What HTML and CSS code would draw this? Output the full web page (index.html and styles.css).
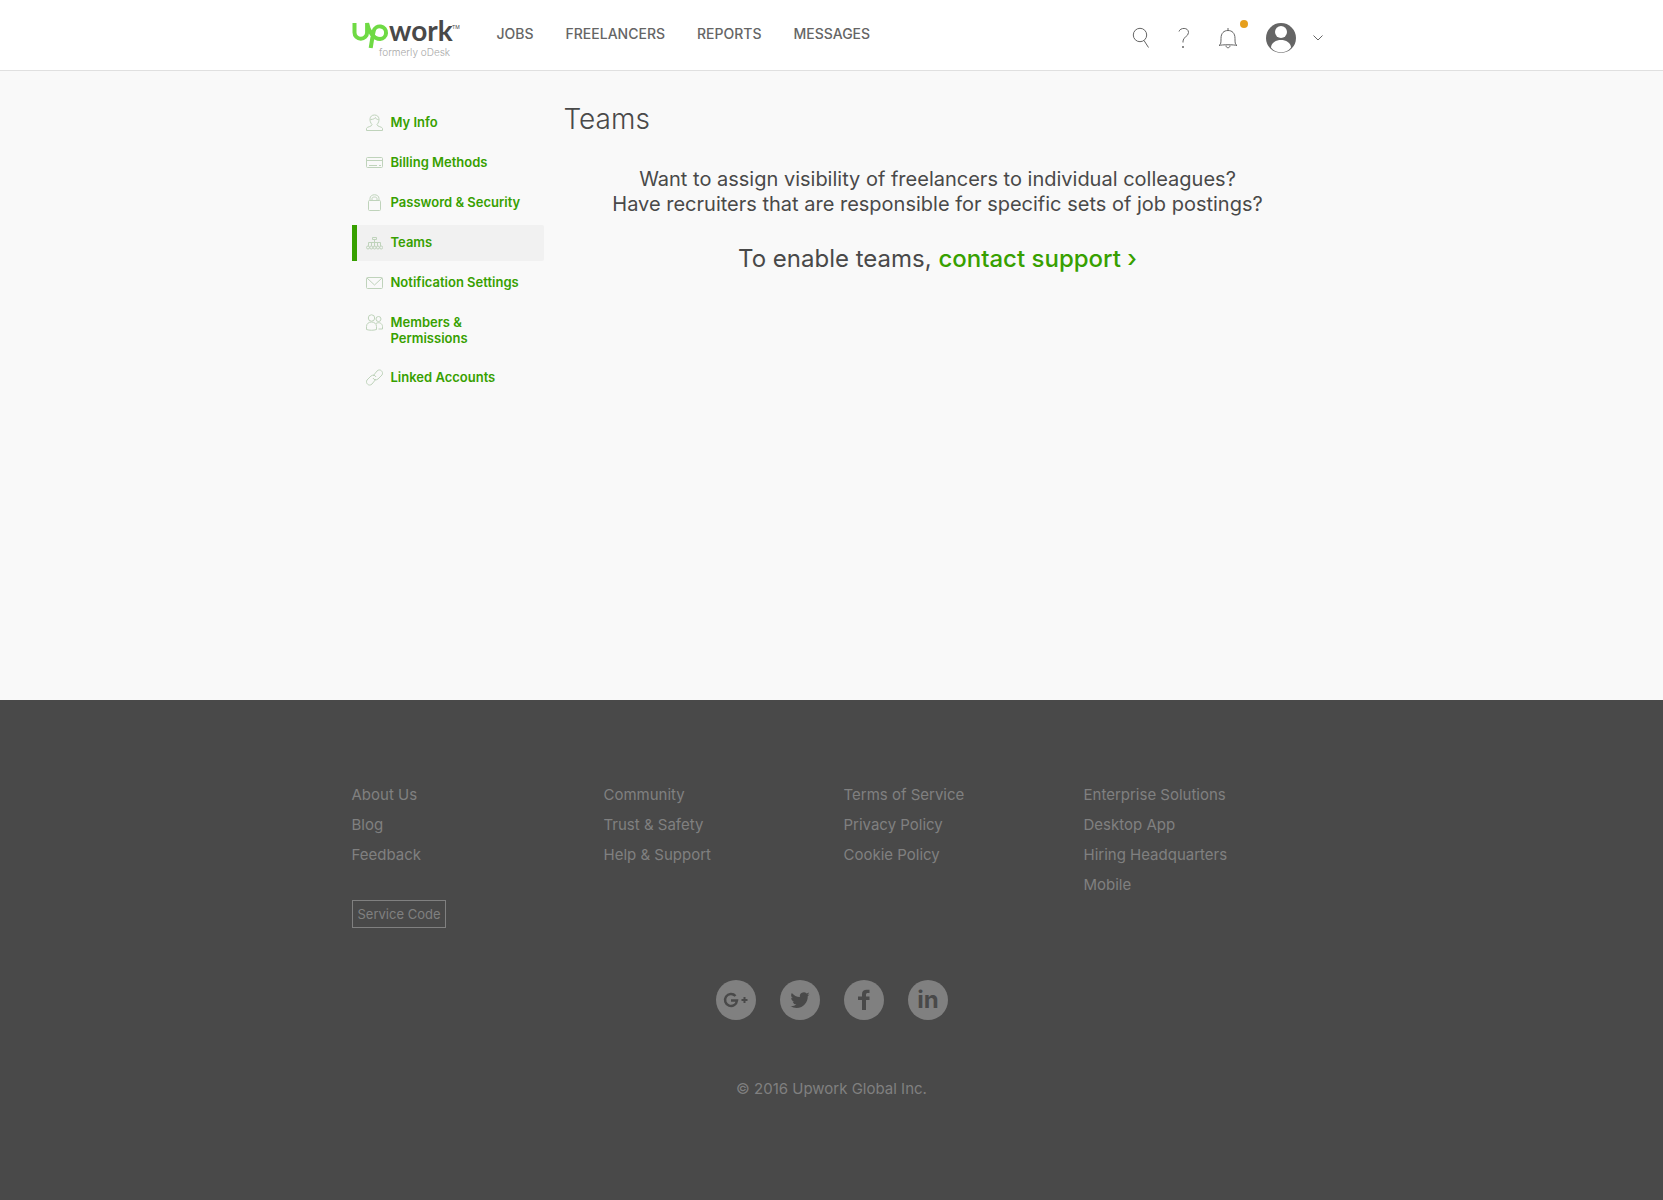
FILE: index.html
```html
<!DOCTYPE html>
<html lang="en">
<head>
<meta charset="utf-8">
<title>Teams - Upwork</title>
<meta name="viewport" content="width=device-width, initial-scale=1">
<link rel="stylesheet" href="styles.css">
</head>
<body>
<header class="site-header">
  <div class="header-inner">
    <a class="logo" href="#" aria-label="Upwork, formerly oDesk">
      <svg width="108" height="44" viewBox="0 0 108 44">
        <path class="logo-mark" d="M2.500 8v9.500a6.300 6.300 0 0 0 12.600 0V8c1.500 8 6 16 13 16a6.300 6.300 0 1 0-6.400-8c-1 4-1.700 9-3 17"/>
        <text class="logo-word" x="37" y="26">work</text>
        <text class="logo-tm" x="100" y="14">TM</text>
        <text class="logo-former" x="27" y="41">formerly oDesk</text>
      </svg>
    </a>
    <nav class="main-nav" aria-label="Main">
      <a href="#">JOBS</a>
      <a href="#">FREELANCERS</a>
      <a href="#">REPORTS</a>
      <a href="#">MESSAGES</a>
    </nav>
    <div class="tools">
      <button class="tool" type="button" aria-label="Search"><svg width="18" height="22" viewBox="0 0 18 22"><circle cx="8" cy="8" r="6.700"/><path d="M12 13.500l4.500 7"/></svg></button>
      <button class="tool" type="button" aria-label="Help"><svg width="12" height="22" viewBox="0 0 12 22"><path d="M1 4.500C2 .5 10.500 0 10.500 5.500c0 4-5.500 4.500-5.500 8.500v1.500"/><circle class="solid" cx="5" cy="20" r="1"/></svg></button>
      <button class="tool" type="button" aria-label="Notifications"><svg width="20" height="22" viewBox="0 0 20 22"><path d="M10 1v2M1 18.500c2-1 2-3 2-7C3 6 6 3.500 10 3.500s7 2.500 7 8c0 4 0 6 2 7-3-1-15-1-18 0zM8 18.500c0 3 4 3 4 0"/></svg><span class="badge"></span></button>
      <button class="tool account" type="button" aria-label="Account">
        <svg width="30" height="30" viewBox="0 0 30 30"><circle class="solid" cx="15" cy="15" r="15"/><circle class="cut" cx="15" cy="9" r="6"/><path class="cut" d="M5 24.500c.5-10 19.500-10 20 0-5 6.500-15 6.500-20 0z"/></svg>
        <svg width="10" height="8" viewBox="0 0 10 8"><path d="M.5 1.500L5 6l4.500-4.500"/></svg>
      </button>
    </div>
  </div>
</header>

<div class="page">
  <nav class="side-nav" aria-label="Settings">
    <a href="#"><svg width="17" height="17" viewBox="0 0 17 17"><path d="M.5 16.500v-2c0-2 5.500-1.500 5.500-4-3-3-3-9.500 2.500-9.500s5.500 6.500 2.500 9.500c0 2.500 5.500 2 5.500 4v2zM4.500 5.500c3 0 4-1 5-2 0 1 1 2 3 2"/></svg>My Info</a>
    <a href="#"><svg width="17" height="17" viewBox="0 0 17 17"><rect x=".5" y="3.500" width="16" height="10" rx="1"/><path d="M1 6.500h15M3 11.500h8M13 11.500h2"/></svg>Billing Methods</a>
    <a href="#"><svg width="17" height="17" viewBox="0 0 17 17"><rect x="2.500" y="6.500" width="12" height="10" rx="1"/><path d="M4 6.500v-2c0-5 9-5 9 0v2M6 6.500v-2c0-2 5-2 5 0v2"/></svg>Password &amp; Security</a>
    <a class="current" href="#" aria-current="page"><svg width="17" height="17" viewBox="0 0 17 17"><path d="M6.500 3.500h4v2h-4zM8.500 5.500v7M2.500 12V8.500h12V12M5.500 8.500V12M11.500 8.500V12"/><circle cx="2" cy="13.500" r="1.500"/><circle cx="5.300" cy="13.500" r="1.500"/><circle cx="8.600" cy="13.500" r="1.500"/><circle cx="11.900" cy="13.500" r="1.500"/><circle cx="15.200" cy="13.500" r="1.500"/></svg>Teams</a>
    <a href="#"><svg width="17" height="17" viewBox="0 0 17 17"><rect x=".5" y="3.500" width="16" height="11" rx="1"/><path d="M1 4l7.500 7L16 4"/></svg>Notification Settings</a>
    <a href="#"><svg width="17" height="17" viewBox="0 0 17 17"><circle cx="5.500" cy="4" r="3.200"/><circle cx="12.500" cy="5" r="2.500"/><path d="M.5 15.500v-3c0-6 10-6 10 0v3c-3 1-7 1-10 0zM10 9.500c3-2 6.500 0 6.500 3v2.500h-4"/></svg>Members &amp; Permissions</a>
    <a href="#"><svg width="17" height="17" viewBox="0 0 17 17"><path d="M7 7l4-5c3-3 7 1 5 4l-4 4c-2 1.500-4 1-5-1M10 10l-4 5c-3 3-7-1-5-4l4-4c2-1.500 4-1 5 1"/></svg>Linked Accounts</a>
  </nav>
  <main class="content">
    <h1>Teams</h1>
    <p class="intro">Want to assign visibility of freelancers to individual colleagues?<br>Have recruiters that are responsible for specific sets of job postings?</p>
    <p class="enable">To enable teams, <a href="#">contact support ›</a></p>
  </main>
</div>

<footer class="site-footer">
  <div class="footer-inner">
    <div class="footer-links">
      <div class="col">
        <a href="#">About Us</a><a href="#">Blog</a><a href="#">Feedback</a>
        <button class="service-code" type="button">Service Code</button>
      </div>
      <div class="col"><a href="#">Community</a><a href="#">Trust &amp; Safety</a><a href="#">Help &amp; Support</a></div>
      <div class="col"><a href="#">Terms of Service</a><a href="#">Privacy Policy</a><a href="#">Cookie Policy</a></div>
      <div class="col"><a href="#">Enterprise Solutions</a><a href="#">Desktop App</a><a href="#">Hiring Headquarters</a><a href="#">Mobile</a></div>
    </div>
    <div class="social">
      <a href="#" aria-label="Google Plus"><svg width="40" height="40" viewBox="0 0 40 40"><path class="line" d="M19.500 16a6 6 0 1 0 1.500 4.500h-6"/><path class="line thin" d="M28.500 17v6M25.500 20h6"/></svg></a>
      <a href="#" aria-label="Twitter"><svg width="40" height="40" viewBox="0 0 40 40"><path transform="translate(10.500 10.500) scale(.8)" d="M23.950 4.570a10 10 0 0 1-2.820.770 4.960 4.960 0 0 0 2.160-2.720c-.950.550-2 .950-3.130 1.180a4.920 4.920 0 0 0-8.380 4.480C7.690 8.090 4.070 6.130 1.640 3.160a4.920 4.920 0 0 0 1.520 6.570 4.900 4.900 0 0 1-2.230-.610v.060a4.920 4.920 0 0 0 3.950 4.830 5 5 0 0 1-2.210.080 4.940 4.940 0 0 0 4.600 3.420A9.870 9.870 0 0 1 0 19.540a13.990 13.990 0 0 0 7.550 2.210c9.050 0 14-7.500 14-13.980 0-.210 0-.420-.020-.630a9.940 9.940 0 0 0 2.420-2.570z"/></svg></a>
      <a href="#" aria-label="Facebook"><svg width="40" height="40" viewBox="0 0 40 40"><path d="M18 30V20h-4v-3.500h4V14c0-3 2-4.300 4.500-4.300h3V13H24c-1.500 0-2 .6-2 1.800v1.700h3.500V20H22v10z"/></svg></a>
      <a href="#" aria-label="LinkedIn"><svg width="40" height="40" viewBox="0 0 40 40"><text x="20" y="28" text-anchor="middle">in</text></svg></a>
    </div>
    <p class="copyright">© 2016 Upwork Global Inc.</p>
  </div>
</footer>
</body>
</html>
```
FILE: styles.css
```css
* { box-sizing: border-box; }

body {
  display: flex;
  flex-direction: column;
  min-height: 100vh;
  margin: 0;
  background: #f9f9f9;
  color: #494949;
  font-family: Inter, "Open Sans", sans-serif;
}

a { color: #37a000; text-decoration: none; }
h1, p { margin: 0; }
button { padding: 0; border: 0; background: none; font: inherit; cursor: pointer; }

/* Header */
.site-header { border-bottom: 1px solid #e0e0e0; background: #fff; }
.header-inner {
  display: flex;
  max-width: 984px;
  height: 70px;
  margin: 0 auto;
  padding: 0 1px 0 12px;
}
.logo { margin: 15px 37px 0 0; }
.logo svg { display: block; overflow: visible; }
.logo-mark { fill: none; stroke: #6fda44; stroke-width: 4; }
.logo-word { fill: #494949; font-family: Lato, sans-serif; font-size: 28px; font-weight: 700; }
.logo-tm { fill: #494949; font-size: 5px; }
.logo-former { fill: #a8a8a8; font-size: 10px; font-weight: 300; }
.main-nav { display: flex; gap: 32px; padding-top: 24px; }
.main-nav a { color: #656565; font-size: 14px; font-weight: 500; line-height: 20px; }
.tools { display: flex; align-items: center; gap: 28px; height: 75px; margin-left: auto; }
.tool { position: relative; display: flex; align-items: center; }
.tool svg { fill: none; stroke: #656565; stroke-width: 1; }
.tool .solid { fill: #656565; stroke: none; }
.tool .cut { fill: #fff; stroke: none; }
.account { gap: 17px; }
.badge {
  position: absolute;
  top: -7px;
  right: -10px;
  width: 8px;
  height: 8px;
  border-radius: 50%;
  background: #e69f1d;
}

/* Settings page */
.page {
  display: flex;
  gap: 20px;
  width: 100%;
  max-width: 960px;
  min-height: 629px;
  margin: 0 auto;
  padding: 34px 0 40px;
}
.side-nav { display: flex; flex: none; flex-direction: column; gap: 4px; width: 192px; }
.side-nav a {
  display: flex;
  gap: 8px;
  padding: 9px 20px 10px 9px;
  border-left: 5px solid transparent;
  border-radius: 0 2px 2px 0;
  font-size: 13px;
  font-weight: 600;
  line-height: 16px;
}
.side-nav .current { border-left-color: #37a000; background: #f1f1f1; }
.side-nav svg { flex: none; fill: none; stroke: #bfd3bb; stroke-width: 1; }
.content { flex: 1; }
h1 { margin-bottom: 34px; font-size: 28px; font-weight: 300; line-height: 28px; }
.intro { font-size: 20px; line-height: 25px; text-align: center; }
.enable { margin-top: 26px; font-size: 24px; line-height: 32px; text-align: center; }
.enable a { font-weight: 500; }

/* Footer */
.site-footer { flex: 1; background: #494949; color: #808080; }
.footer-inner { max-width: 960px; margin: 0 auto; padding: 80px 0 60px; }
.footer-links { display: grid; grid-template-columns: 252px 240px 240px 1fr; }
.col { display: flex; flex-direction: column; align-items: flex-start; }
.col a { color: #808080; font-size: 15px; line-height: 30px; }
.service-code {
  height: 28px;
  margin-top: 30px;
  padding: 0 5px;
  border: 1px solid #808080;
  color: #808080;
  font-size: 13px;
}
.social { display: flex; justify-content: center; gap: 24px; margin-top: 52px; }
.social a { width: 40px; height: 40px; border-radius: 50%; background: #808080; }
.social svg { display: block; fill: #494949; font-size: 24px; font-weight: 700; }
.social .line { fill: none; stroke: #494949; stroke-width: 2.5; }
.social .thin { stroke-width: 2; }
.copyright { margin-top: 54px; font-size: 15px; line-height: 30px; text-align: center; }
```
